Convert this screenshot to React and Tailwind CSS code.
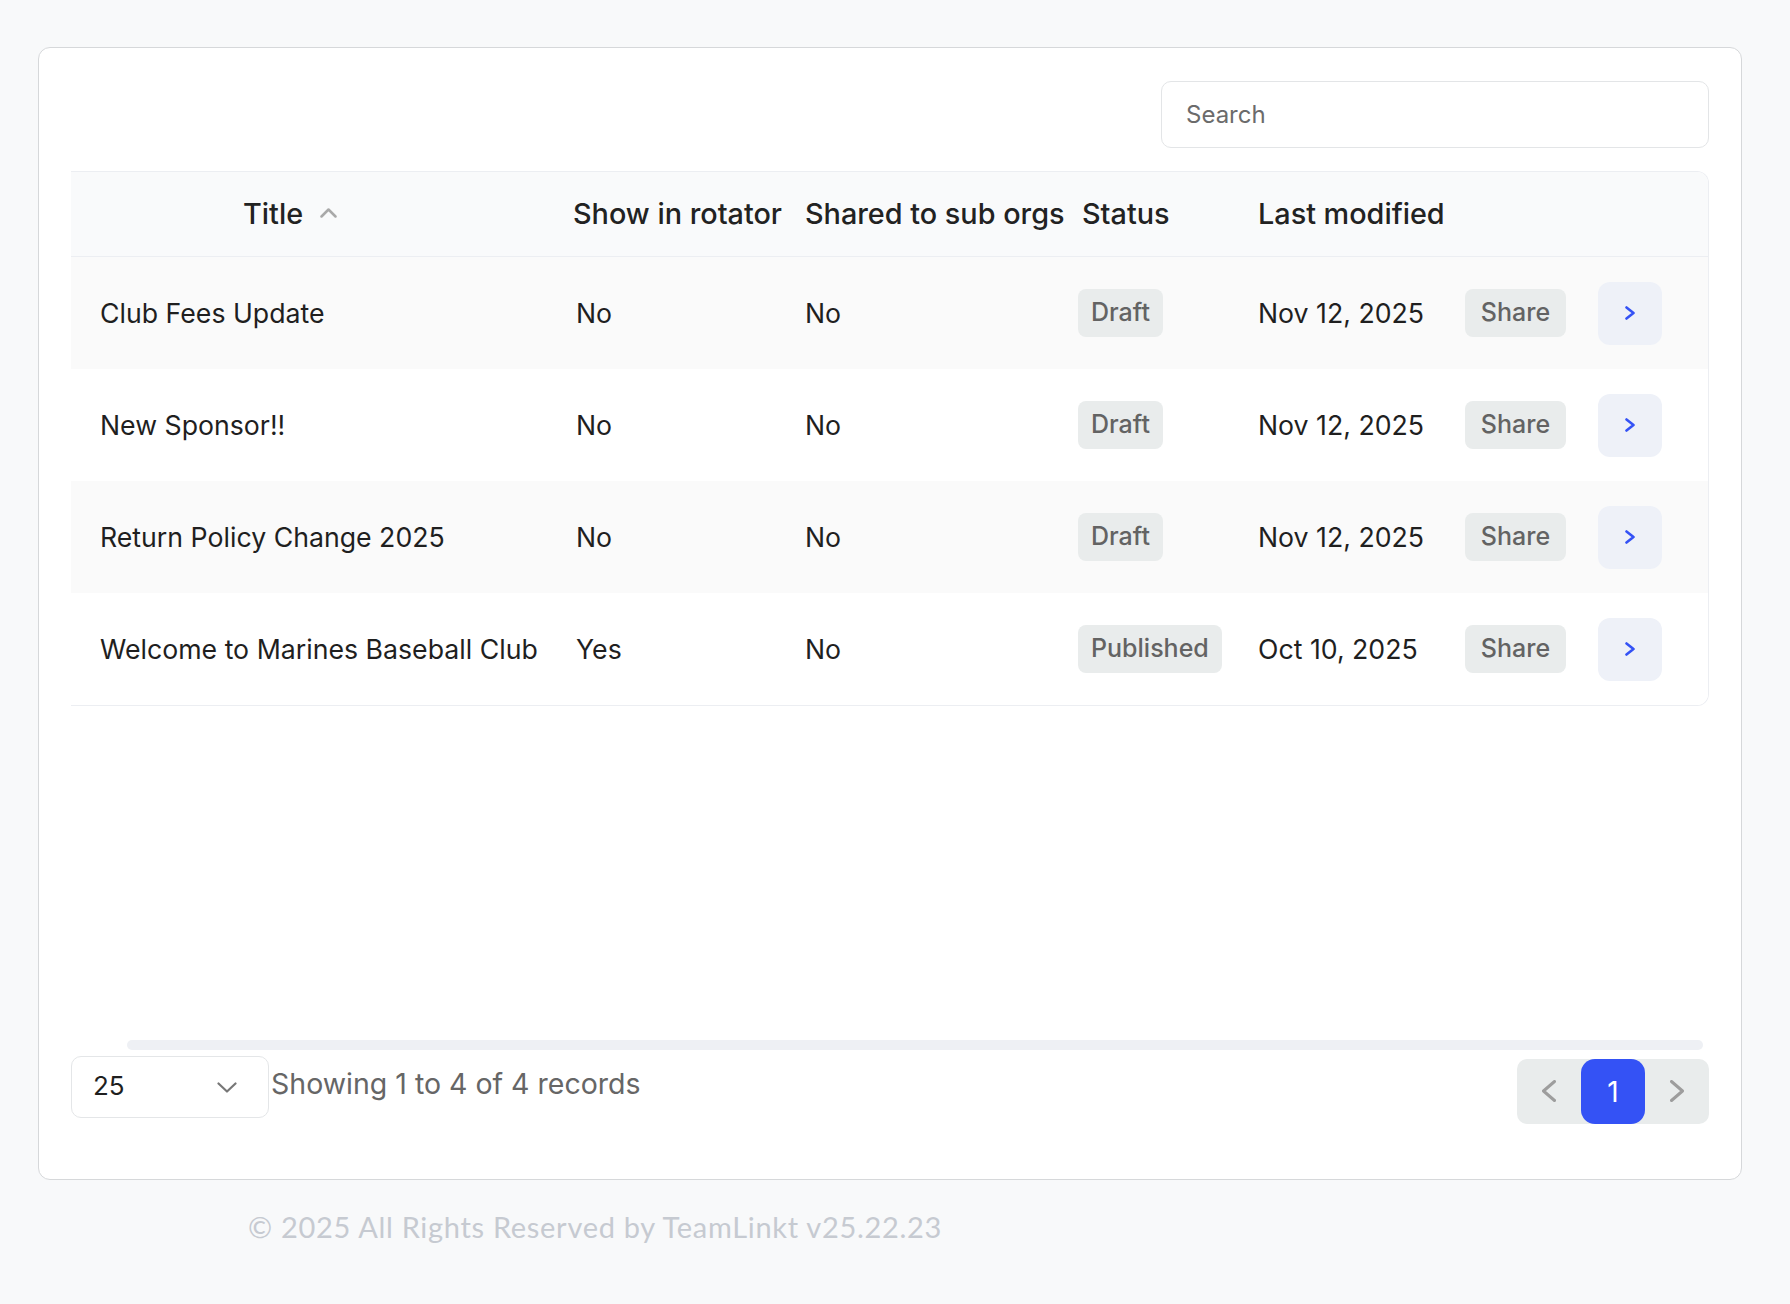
import React from 'react';

const rows = [
  { title: 'Club Fees Update', rotator: 'No', shared: 'No', status: 'Draft', modified: 'Nov 12, 2025' },
  { title: 'New Sponsor!!', rotator: 'No', shared: 'No', status: 'Draft', modified: 'Nov 12, 2025' },
  { title: 'Return Policy Change 2025', rotator: 'No', shared: 'No', status: 'Draft', modified: 'Nov 12, 2025' },
  { title: 'Welcome to Marines Baseball Club', rotator: 'Yes', shared: 'No', status: 'Published', modified: 'Oct 10, 2025' },
];

const cols = 'grid grid-cols-[502px_232px_273px_180px_207px_133px_110px] items-center';

function Chevron({ dir = 'right', className = '', w = 9, h = 13, stroke = 2.5 }) {
  const pts = dir === 'right'
    ? `1.5,1.5 ${w - 1.5},${h / 2} 1.5,${h - 1.5}`
    : dir === 'left'
      ? `${w - 1.5},1.5 1.5,${h / 2} ${w - 1.5},${h - 1.5}`
      : dir === 'up'
        ? `1.5,${h - 1.5} ${w / 2},1.5 ${w - 1.5},${h - 1.5}`
        : `1.5,1.5 ${w / 2},${h - 1.5} ${w - 1.5},1.5`;
  return (
    <svg width={w} height={h} viewBox={`0 0 ${w} ${h}`} className={className} fill="none">
      <polyline points={pts} stroke="currentColor" strokeWidth={stroke} strokeLinecap="round" strokeLinejoin="round" />
    </svg>
  );
}

export default function App() {
  return (
    <div className="min-h-screen bg-[#f8f9fa] pt-[47px] pl-[38px] pr-[48px] font-['Inter',sans-serif] text-[#1f1f1f]">
      {/* Card */}
      <div className="h-[1133px] rounded-[12px] border border-[#d6d8da] bg-white px-[32px] pt-[33px] pb-[55px] flex flex-col">
        {/* Search */}
        <div className="flex justify-end">
          <div className="w-[548px] h-[67px] rounded-[10px] border border-[#e3e5e7] flex items-center pl-[24px] text-[24px] text-[#6b6b6b]">
            Search
          </div>
        </div>

        {/* Table + scroll area */}
        <div className="mt-[23px] flex-1 flex flex-col">
          <div className="border-y border-r border-[#eceef2] rounded-r-[12px] overflow-hidden">
            {/* Header */}
            <div className={`${cols} h-[85px] bg-[#f9fafb] border-b border-[#eceef2] text-[28.8px] font-medium text-[#222]`}>
              <div className="pl-[172px] flex items-center gap-[17px]">
                <span>Title</span>
                <Chevron dir="up" w={17} h={10} stroke={2.5} className="text-[#a9a9a9] mt-[-2px]" />
              </div>
              <div className="whitespace-nowrap">Show in rotator</div>
              <div className="whitespace-nowrap">Shared to sub orgs</div>
              <div className="pl-[4px]">Status</div>
              <div className="whitespace-nowrap">Last modified</div>
              <div />
              <div />
            </div>

            {/* Rows */}
            {rows.map((r, i) => (
              <div key={r.title} className={`${cols} h-[112px] text-[26.7px] ${i % 2 === 0 ? 'bg-[#fafafa]' : 'bg-white'}`}>
                <div className="pl-[29px] whitespace-nowrap">{r.title}</div>
                <div className="pl-[3px]">{r.rotator}</div>
                <div>{r.shared}</div>
                <div>
                  <span className="inline-flex items-center h-[48px] px-[13px] rounded-[8px] bg-[#e9ecec] text-[#636363] text-[25px] font-medium">
                    {r.status}
                  </span>
                </div>
                <div className="whitespace-nowrap">{r.modified}</div>
                <div>
                  <button className="w-[101px] h-[48px] rounded-[8px] bg-[#e9ecec] text-[#636363] text-[25px] font-medium">
                    Share
                  </button>
                </div>
                <div>
                  <button className="w-[64px] h-[63px] rounded-[12px] bg-[#eef1f8] flex items-center justify-center">
                    <Chevron dir="right" w={10} h={14} stroke={2.6} className="text-[#3452f5]" />
                  </button>
                </div>
              </div>
            ))}
          </div>

          {/* Horizontal scrollbar */}
          <div className="mt-auto ml-[56px] mr-[6px] h-[10px] rounded-full bg-[#eef0f4]" />
        </div>

        {/* Footer row */}
        <div className="mt-[6px] flex items-start justify-between">
          <div className="flex items-center">
            <div className="w-[198px] h-[62px] rounded-[10px] border border-[#e4e6e8] flex items-center justify-between pl-[21px] pr-[31px] text-[26px] text-[#1f1f1f]">
              <span className="mt-[-3px]">25</span>
              <Chevron dir="down" w={20} h={11} stroke={2.2} className="text-[#777]" />
            </div>
            <span className="ml-[2px] mt-[-6px] text-[28.5px] text-[#666] whitespace-nowrap">Showing 1 to 4 of 4 records</span>
          </div>
          <div className="mt-[3px] flex rounded-[10px] bg-[#e9ecec]">
            <button className="w-[64px] h-[64px] flex items-center justify-center">
              <Chevron dir="left" w={14} h={22} stroke={3} className="text-[#9d9d9d]" />
            </button>
            <button className="w-[64px] h-[65px] rounded-[14px] bg-[#3452f5] text-white text-[28px] flex items-center justify-center">
              1
            </button>
            <button className="w-[64px] h-[64px] flex items-center justify-center">
              <Chevron dir="right" w={14} h={22} stroke={3} className="text-[#9d9d9d]" />
            </button>
          </div>
        </div>
      </div>

      {/* Copyright */}
      <div className="mt-[25px] pl-[210px] pb-[60px] text-[29px] tracking-[0.7px] text-[#c6cad1] font-['Lato',sans-serif] whitespace-nowrap">
        © 2025 All Rights Reserved by TeamLinkt v25.22.23
      </div>
    </div>
  );
}
